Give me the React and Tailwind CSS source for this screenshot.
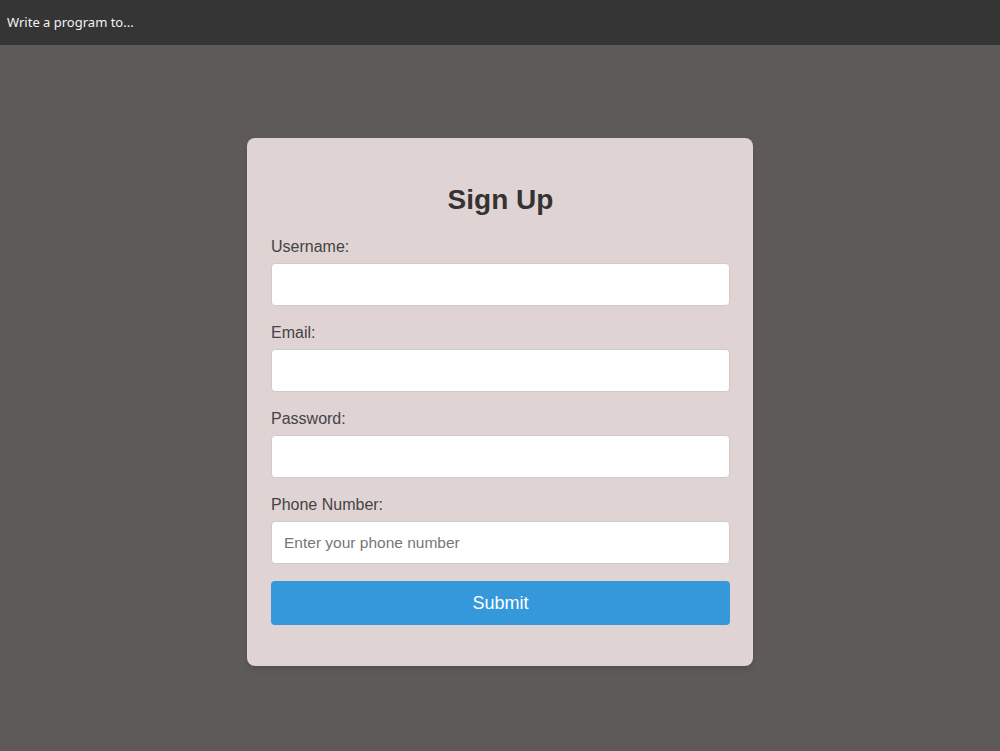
import { useState } from 'react';

const fields = [
  { id: 'username', label: 'Username:', type: 'text' },
  { id: 'email', label: 'Email:', type: 'email' },
  { id: 'password', label: 'Password:', type: 'password' },
  { id: 'phone', label: 'Phone Number:', type: 'tel', placeholder: 'Enter your phone number' },
];

export default function App() {
  const [values, setValues] = useState({});

  const update = (id) => (e) => setValues({ ...values, [id]: e.target.value });

  return (
    <div className="min-h-screen flex flex-col bg-[#5e5a59]">
      {/* Top bar */}
      <header className="h-[45px] shrink-0 flex items-center px-[7px] bg-[#353535]">
        <span className="text-[13px] text-[#f2f2f2] font-['Noto_Sans',sans-serif]">Write a program to...</span>
      </header>

      {/* Form card */}
      <main className="flex justify-center pt-[93px]">
        <form
          className="w-[506px] rounded-lg bg-[#e0d3d3] pl-[24px] pr-[23px] pt-[46px] pb-[41px] shadow-md font-['Liberation_Sans',Arial,sans-serif]"
          onSubmit={(e) => e.preventDefault()}
        >
          <h2 className="text-[28px] leading-8 font-bold text-center text-[#333]">Sign Up</h2>

          <div className="mt-[22px] flex flex-col gap-[18px]">
            {fields.map((f) => (
              <div key={f.id} className="flex flex-col gap-[7px]">
                <label htmlFor={f.id} className="text-base leading-[18px] text-[#444]">
                  {f.label}
                </label>
                <input
                  id={f.id}
                  type={f.type}
                  placeholder={f.placeholder}
                  value={values[f.id] || ''}
                  onChange={update(f.id)}
                  className="h-[43px] w-full rounded border border-[#ccc] bg-white px-3 text-[15.5px] text-[#333] placeholder:text-[#777] outline-none"
                />
              </div>
            ))}
          </div>

          <button
            type="submit"
            className="mt-[17px] h-[44px] w-full rounded bg-[#3498db] text-lg text-white"
          >
            Submit
          </button>
        </form>
      </main>
    </div>
  );
}
